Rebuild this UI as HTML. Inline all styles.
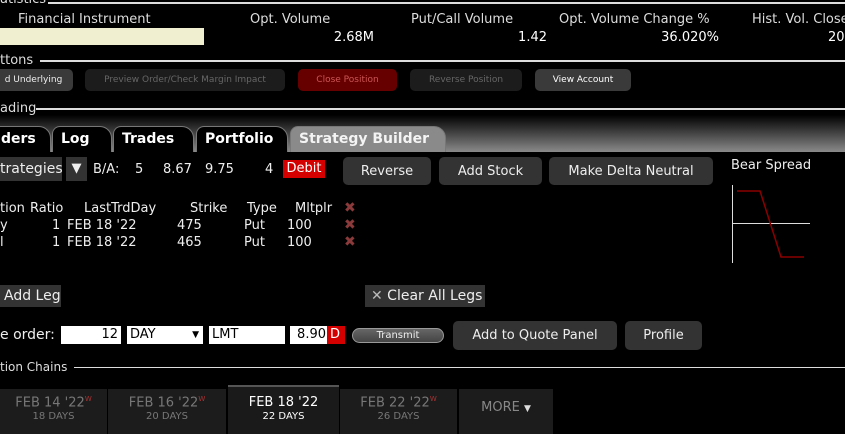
<!DOCTYPE html>
<html><head><meta charset="utf-8"><style>
*{margin:0;padding:0;box-sizing:border-box}
body{width:845px;height:434px;background:#000;overflow:hidden;position:relative;font-family:"DejaVu Sans","Liberation Sans",sans-serif;color:#eee}
.a{position:absolute;white-space:nowrap}
.l{font-size:13px;color:#ddd}
.ln{position:absolute;height:2px;background:#ddd}
.b{position:absolute;border-radius:5px;font-size:9px;text-align:center;line-height:22px}
.bt{position:absolute;background:#333;border-radius:5px;font-size:13px;color:#eee;text-align:center}
.tab{position:absolute;top:126px;height:26px;background:#000;border:1px solid #777;border-bottom:none;border-radius:8px 12px 0 0;font-weight:bold;font-size:14px;color:#fff;line-height:24px;padding-left:8px}
.t{font-size:13px;color:#eee}
.x{color:#8a3a3a;font-weight:bold;font-size:14px}
.inp{position:absolute;top:326px;height:18px;background:#fff;color:#000;font-size:13px;line-height:18px;padding:0 3px}
.dt{position:absolute;top:389px;height:45px;background:#1c1c1c;text-align:center;font-size:13px;color:#777;padding-top:6px}
.dt small{display:block;font-size:10px;margin-top:1px}
.dt sup{color:#a33;font-size:7px}
</style></head><body>
<div class="a l" style="left:0;top:-8px">atistics</div>
<div class="ln" style="left:48px;top:2px;right:0"></div>
<div class="a l" style="left:18px;top:12px">Financial Instrument</div>
<div class="a" style="left:0;top:28px;width:204px;height:17px;background:#f0efd0"></div>
<div class="a l" style="left:250px;top:12px">Opt. Volume</div>
<div class="a l" style="right:471px;top:30px;color:#fff">2.68M</div>
<div class="a l" style="left:411px;top:12px">Put/Call Volume</div>
<div class="a l" style="right:298px;top:30px;color:#fff">1.42</div>
<div class="a l" style="left:559px;top:12px">Opt. Volume Change %</div>
<div class="a l" style="right:126px;top:30px;color:#fff">36.020%</div>
<div class="a l" style="left:752px;top:12px">Hist. Vol. Close</div>
<div class="a l" style="left:828px;top:30px;color:#fff">20</div>

<div class="a l" style="left:0;top:53px">ttons</div>
<div class="ln" style="left:40px;top:60px;right:0"></div>
<div class="b" style="left:-6px;top:69px;width:79px;background:#3a3a3a;color:#eee">d Underlying</div>
<div class="b" style="left:85px;top:69px;width:200px;background:#1c1c1c;color:#666">Preview Order/Check Margin Impact</div>
<div class="b" style="left:298px;top:69px;width:99px;background:#660000;color:#c55">Close Position</div>
<div class="b" style="left:410px;top:69px;width:112px;background:#1c1c1c;color:#666">Reverse Position</div>
<div class="b" style="left:535px;top:69px;width:96px;background:#3a3a3a;color:#fff">View Account</div>

<div class="a l" style="left:0;top:101px">ading</div>
<div class="ln" style="left:36px;top:108px;right:0"></div>
<div class="a" style="left:0;top:115px;width:845px;height:37px;background:linear-gradient(#000,#8a8a8a)"></div>
<div class="tab" style="left:-10px;width:61px;padding-left:10px">ders</div>
<div class="tab" style="left:52px;width:60px">Log</div>
<div class="tab" style="left:113px;width:81px">Trades</div>
<div class="tab" style="left:196px;width:92px">Portfolio</div>
<div class="tab" style="left:290px;width:156px;background:#8a8a8a;color:#f4f4f4">Strategy Builder</div>

<div class="a" style="left:0;top:157px;width:62px;height:24px;background:#333;font-size:14px;line-height:24px">trategies</div>
<div class="a" style="left:66px;top:157px;width:21px;height:24px;background:#333;font-size:13px;line-height:24px;text-align:center">▼</div>
<div class="a t" style="left:93px;top:162px">B/A:</div>
<div class="a t" style="left:135px;top:162px">5</div>
<div class="a t" style="left:163px;top:162px">8.67</div>
<div class="a t" style="left:205px;top:162px">9.75</div>
<div class="a t" style="left:265px;top:162px">4</div>
<div class="a t" style="left:283px;top:160px;width:42px;height:18px;background:#d40000;color:#fff;text-align:center;line-height:18px">Debit</div>
<div class="bt" style="left:343px;top:157px;width:88px;height:28px;line-height:29px">Reverse</div>
<div class="bt" style="left:439px;top:157px;width:103px;height:28px;line-height:29px">Add Stock</div>
<div class="bt" style="left:549px;top:157px;width:164px;height:28px;line-height:29px">Make Delta Neutral</div>
<div class="a t" style="left:731px;top:158px">Bear Spread</div>
<svg class="a" style="left:725px;top:180px" width="90" height="90">
<line x1="7.5" y1="5" x2="7.5" y2="83" stroke="#ddd" stroke-width="1"/>
<line x1="7" y1="43.5" x2="85" y2="43.5" stroke="#ddd" stroke-width="1"/>
<polyline points="12,11 35,11 56,77 79,77" fill="none" stroke="#8a0000" stroke-width="1.5"/>
</svg>

<div class="a t" style="left:0;top:201px">tion</div>
<div class="a t" style="left:30px;top:201px">Ratio</div>
<div class="a t" style="left:84px;top:201px">LastTrdDay</div>
<div class="a t" style="left:190px;top:201px">Strike</div>
<div class="a t" style="left:247px;top:201px">Type</div>
<div class="a t" style="left:295px;top:201px">Mltplr</div>
<div class="a x" style="left:344px;top:200px">✖</div>
<div class="a t" style="left:0;top:218px">y</div>
<div class="a t" style="left:52px;top:218px">1</div>
<div class="a t" style="left:67px;top:218px">FEB 18 '22</div>
<div class="a t" style="left:177px;top:218px">475</div>
<div class="a t" style="left:244px;top:218px">Put</div>
<div class="a t" style="left:287px;top:218px">100</div>
<div class="a x" style="left:344px;top:217px">✖</div>
<div class="a t" style="left:0;top:235px">l</div>
<div class="a t" style="left:52px;top:235px">1</div>
<div class="a t" style="left:67px;top:235px">FEB 18 '22</div>
<div class="a t" style="left:177px;top:235px">465</div>
<div class="a t" style="left:244px;top:235px">Put</div>
<div class="a t" style="left:287px;top:235px">100</div>
<div class="a x" style="left:344px;top:234px">✖</div>

<div class="a" style="left:0;top:285px;width:61px;height:22px;background:#333;font-size:14px;line-height:23px;padding-left:4px">Add Leg</div>
<div class="a" style="left:365px;top:285px;width:120px;height:22px;background:#333;font-size:14px;line-height:23px;padding-left:6px"><span style="color:#bbb;font-weight:300">✕</span> Clear All Legs</div>

<div class="a" style="left:0;top:327px;font-size:14px;color:#eee">e order:</div>
<div class="inp" style="left:61px;width:60px;text-align:right">12</div>
<div class="inp" style="left:127px;width:76px">DAY<span style="position:absolute;right:4px;font-size:9px">▼</span></div>
<div class="inp" style="left:209px;width:76px">LMT</div>
<div class="inp" style="left:290px;width:37px;text-align:right;padding-right:1px">8.90</div>
<div class="inp" style="left:327px;width:18px;background:#d40000;color:#fff">D</div>
<div class="a" style="left:352px;top:328px;width:92px;height:15px;border-radius:8px;background:linear-gradient(#666,#444);border:1px solid #999;font-size:10px;text-align:center;line-height:13px;color:#eee">Transmit</div>
<div class="bt" style="left:453px;top:321px;width:164px;height:29px;line-height:30px">Add to Quote Panel</div>
<div class="bt" style="left:625px;top:321px;width:77px;height:29px;line-height:30px">Profile</div>

<div class="a l" style="left:0;top:360px;font-size:12px">tion Chains</div>
<div class="ln" style="left:74px;top:367px;right:0;height:1px"></div>
<div class="dt" style="left:0;width:107px">FEB 14 '22<sup>W</sup><small>18 DAYS</small></div>
<div class="dt" style="left:108px;width:118px">FEB 16 '22<sup>W</sup><small>20 DAYS</small></div>
<div class="dt" style="left:228px;top:385px;width:111px;height:49px;background:#1a1a1a;border-top:2px solid #555;color:#fff;padding-top:8px">FEB 18 '22<small style="color:#fff">22 DAYS</small></div>
<div class="dt" style="left:340px;width:117px">FEB 22 '22<sup>W</sup><small>26 DAYS</small></div>
<div class="dt" style="left:459px;width:94px;line-height:38px;padding-top:0;color:#888">MORE <span style="font-size:9px;color:#ddd">▼</span></div>
</body></html>
